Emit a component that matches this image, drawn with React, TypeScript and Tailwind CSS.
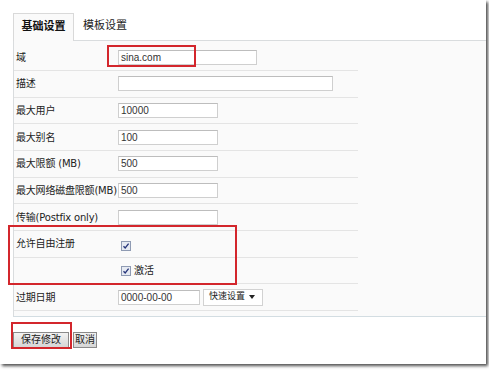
import React from 'react';

type Row = { label: string; kind: 'input' | 'check' | 'checkLabel' | 'date'; value?: string; w?: string };

const rows: Row[] = [
  { label: '域', kind: 'input', value: 'sina.com', w: 'w-[139px]' },
  { label: '描述', kind: 'input', value: '', w: 'w-[215px]' },
  { label: '最大用户', kind: 'input', value: '10000', w: 'w-[100px]' },
  { label: '最大别名', kind: 'input', value: '100', w: 'w-[100px]' },
  { label: '最大限额 (MB)', kind: 'input', value: '500', w: 'w-[100px]' },
  { label: '最大网络磁盘限额(MB)', kind: 'input', value: '500', w: 'w-[100px]' },
  { label: '传输(Postfix only)', kind: 'input', value: '', w: 'w-[100px]' },
  { label: '允许自由注册', kind: 'check' },
  { label: '', kind: 'checkLabel' },
  { label: '过期日期', kind: 'date' },
];

const labelFont = { fontFamily: '"DejaVu Sans", "Noto Sans CJK SC", sans-serif' };
const inputFont = { fontFamily: '"Liberation Sans", "Noto Sans CJK SC", sans-serif' };

const Check = () => (
  <span className="inline-flex h-[10px] w-[10px] items-center justify-center border border-[#8f9bb3] bg-[#e6eaf2]">
    <svg width="8" height="8" viewBox="0 0 8 8">
      <path d="M1.5 4.2 L3.2 6 L6.6 1.6" fill="none" stroke="#26357a" strokeWidth="1.3" />
    </svg>
  </span>
);

const TextBox = ({ value, w }: { value?: string; w?: string }) => (
  <div
    className={`${w} flex h-[15px] shrink-0 items-center border border-[#cfcfcf] border-t-[#bdbdbd] bg-white pl-[2px] text-[10px] text-[#333]`}
    style={inputFont}
  >
    {value}
  </div>
);

export default function App() {
  return (
    <div className="relative h-[370px] w-[489px] bg-white">
      <div className="h-[364px] w-[486px] bg-white pl-[13px] pt-[13px] shadow-[2px_2px_3px_rgba(0,0,0,0.7)]">
        <div className="flex h-[27px] items-end" style={labelFont}>
          <div className="relative z-10 -mb-px flex h-[28px] w-[61px] items-center justify-center border border-b-0 border-[#d9d9d9] bg-[#fafafa] text-[11px] font-semibold text-[#111]">
            基础设置
          </div>
          <div className="flex h-[27px] items-center pl-[9px] text-[11px] text-[#222]">模板设置</div>
        </div>
        <div className="border-b border-l border-t border-[#d9dcde] border-b-[#d3dde2] bg-[#fafafa] pb-[5px] pt-[3.33px]">
          <div className="w-[344px]">
            {rows.map((r, i) => (
              <div key={i} className="flex h-[26.67px] items-center border-b border-[#e4e4e4]">
                <div
                  className="min-w-[104px] shrink-0 whitespace-nowrap pl-[2px] text-[10px] tracking-[-0.2px] text-[#222]"
                  style={labelFont}
                >
                  {r.label}
                </div>
                {r.kind === 'input' && <TextBox value={r.value} w={r.w} />}
                {r.kind === 'check' && (
                  <div className="pl-[3px] pt-[1px]">
                    <Check />
                  </div>
                )}
                {r.kind === 'checkLabel' && (
                  <div className="flex items-center gap-[3px] pl-[3px] pt-[1px] text-[10px] text-[#222]" style={labelFont}>
                    <Check />
                    <span>激活</span>
                  </div>
                )}
                {r.kind === 'date' && (
                  <div className="flex items-center gap-[3px]">
                    <TextBox value="0000-00-00" w="w-[82px]" />
                    <div
                      className="flex h-[17px] w-[60px] items-center justify-between border border-[#d2d2d2] bg-white pl-[5px] pr-[7px] text-[9px] text-[#222]"
                      style={labelFont}
                    >
                      <span>快速设置</span>
                      <svg width="6" height="4" viewBox="0 0 6 4">
                        <path d="M0 0 H6 L3 4 Z" fill="#222" />
                      </svg>
                    </div>
                  </div>
                )}
              </div>
            ))}
          </div>
        </div>
        <div className="mt-[15px] flex items-center gap-[4px]" style={labelFont}>
          <button className="flex h-[16px] w-[56px] items-center justify-center border border-[#8a8a8a] bg-gradient-to-b from-[#f2f2f2] to-[#d6d6d6] text-[10px] text-[#222]">
            保存修改
          </button>
          <button className="flex h-[16px] w-[24px] items-center justify-center border border-[#8a8a8a] bg-gradient-to-b from-[#f2f2f2] to-[#d6d6d6] text-[10px] text-[#222]">
            取消
          </button>
        </div>
      </div>
      <div className="pointer-events-none absolute left-[107px] top-[45px] h-[22px] w-[89px] border-2 border-[#d3262c]" />
      <div className="pointer-events-none absolute left-[8px] top-[225px] h-[60px] w-[229px] border-2 border-[#d3262c]" />
      <div className="pointer-events-none absolute left-[11px] top-[322px] h-[27px] w-[61px] border-2 border-[#d3262c]" />
    </div>
  );
}
